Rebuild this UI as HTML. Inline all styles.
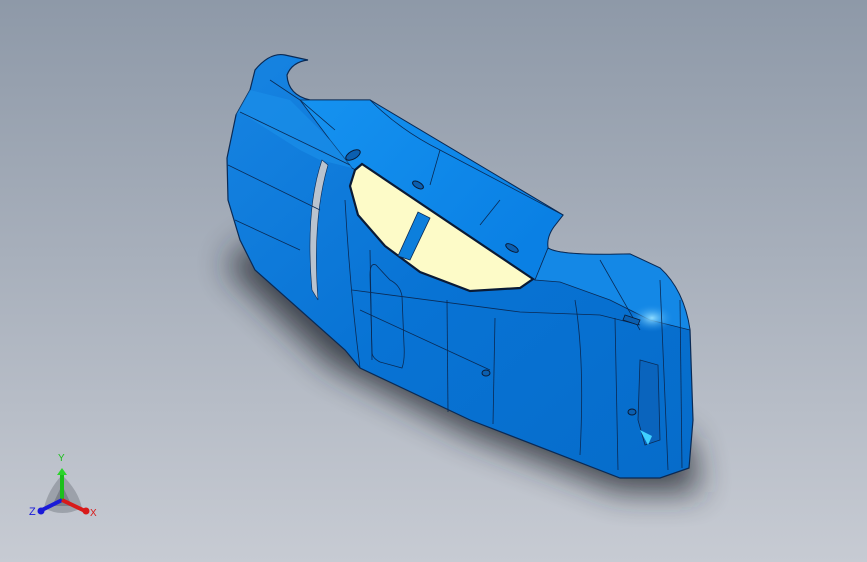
<!DOCTYPE html>
<html><head><style>
html,body{margin:0;padding:0;width:867px;height:562px;overflow:hidden}
body{background:linear-gradient(180deg,#8e99a8 0%,#a7afbb 45%,#c7cbd3 100%)}
svg{position:absolute;left:0;top:0}
</style></head><body>
<svg width="867" height="562" viewBox="0 0 867 562">
<defs>
<filter id="bl" x="-30%" y="-30%" width="160%" height="160%"><feGaussianBlur stdDeviation="16"/></filter>
<linearGradient id="body" x1="0" y1="0" x2="1" y2="1">
<stop offset="0" stop-color="#1784e2"/><stop offset="0.5" stop-color="#0873d4"/><stop offset="1" stop-color="#066cca"/>
</linearGradient>
<linearGradient id="roof" x1="0" y1="0" x2="1" y2="0.6">
<stop offset="0" stop-color="#1592f0"/><stop offset="1" stop-color="#0a80e4"/>
</linearGradient>
<radialGradient id="hl" cx="0.5" cy="0.5" r="0.5"><stop offset="0" stop-color="#8fdcff"/><stop offset="1" stop-color="#1a8ae6" stop-opacity="0"/></radialGradient>
</defs>
<path d="M225 265 L330 365 L470 435 L620 492 L700 492 L690 440 L560 390 L400 320 L255 240 Z" fill="#23272f" opacity="0.8" filter="url(#bl)"/>
<path d="M255 70 Q270 52 285 55 L308 60 Q292 62 287 75 Q288 95 310 100 L370 100 L563 215 L556 224 Q546 236 548 248 Q560 256 630 254 L660 268 Q684 290 690 330 L693 420 L689 468 L660 478 L620 478 L470 420 L360 368 L345 350 L300 310 L255 270 L240 240 L228 200 L227 158 L236 115 L250 90 Z" fill="url(#body)" stroke="#0a2a55" stroke-width="1.2"/>
<path d="M300 100 L370 100 L563 215 L556 224 Q546 236 548 248 L535 280 L352 168 L330 140 Z" fill="url(#roof)" stroke="#0a2a55" stroke-width="0.8"/>
<path d="M548 248 Q560 256 630 254 L660 268 Q684 290 690 330 L650 320 L610 300 L560 282 L535 280 Z" fill="#1488e6" stroke="#0a2a55" stroke-width="0.8"/>
<ellipse cx="652" cy="318" rx="22" ry="14" fill="url(#hl)"/>
<path d="M236 115 L250 90 L290 100 L330 140 L352 168 L320 160 L300 150 L240 112 Z" fill="#1a8ee8" opacity="0.7"/>
<path d="M322 160 Q305 210 312 290 L318 300 Q312 220 328 165 Z" fill="#b9c3cf" stroke="#0a2a55" stroke-width="0.6"/>
<path d="M355 170 L362 164 L533 279 L520 288 L470 291 L420 272 L385 246 L358 215 L350 186 Z" fill="#fdfbc8" stroke="#0a1a35" stroke-width="2.2"/>
<path d="M398 256 L418 212 L430 218 L410 260 Z" fill="#0d7fdc" stroke="#0a2a55" stroke-width="0.8"/>
<g fill="none" stroke="#0a2a55" stroke-width="0.8">
<path d="M345 200 Q350 290 360 368"/>
<path d="M370 250 L372 360"/>
<path d="M376 265 Q370 262 370 275 L372 352 Q372 358 380 362 L402 368 Q405 360 404 345 L402 296 Q400 285 390 280 Z"/>
<path d="M447 300 L448 412"/>
<path d="M495 318 L493 424"/>
<path d="M575 300 Q585 360 580 455"/>
<path d="M615 318 L618 470"/>
<path d="M360 310 L490 370"/>
<path d="M352 290 L520 312 L600 315 L640 325"/>
<path d="M240 112 L350 165"/>
<path d="M228 165 L320 210"/>
<path d="M235 220 L300 250"/>
<path d="M660 280 L668 470"/>
<path d="M680 300 L682 468"/>
<path d="M370 100 Q400 130 440 150 L563 215"/>
<path d="M440 150 L430 185"/>
<path d="M500 200 L480 225"/>
<path d="M600 260 L640 330"/>
<path d="M270 80 L300 100 L335 130"/>
</g>
<path d="M640 360 L658 365 L660 440 L645 445 L638 420 Z" fill="#0a64bd" stroke="#0a2a55" stroke-width="0.8"/>
<path d="M640 430 L652 436 L648 445 Z" fill="#3fd0ff"/>
<ellipse cx="353" cy="155" rx="8" ry="4" fill="#0b5fb0" stroke="#0a1a35" transform="rotate(-30 353 155)"/>
<ellipse cx="418" cy="185" rx="6" ry="3" fill="#0b5fb0" stroke="#0a1a35" transform="rotate(30 418 185)"/>
<ellipse cx="512" cy="248" rx="7" ry="3" fill="#0b5fb0" stroke="#0a1a35" transform="rotate(30 512 248)"/>
<ellipse cx="486" cy="373" rx="4" ry="3" fill="#0b5fb0" stroke="#0a1a35"/>
<ellipse cx="632" cy="412" rx="4" ry="3" fill="#0b5fb0" stroke="#0a1a35"/>
<path d="M625 315 L640 320 L638 325 L623 320 Z" fill="#0b5fb0" stroke="#0a1a35" stroke-width="0.8"/>
<path d="M62 475 Q48 490 44 508 Q62 518 82 508 Q78 490 62 475 Z" fill="#7d838c" opacity="0.55"/>
<path d="M62 485 L52 506 L72 506 Z" fill="#5c626b" opacity="0.5"/>
<line x1="62" y1="500" x2="62" y2="474" stroke="#1bbf1b" stroke-width="4"/>
<path d="M57 475 L62 468 L67 475 Z" fill="#2ad42a"/>
<line x1="62" y1="500" x2="42" y2="510" stroke="#1a1ad8" stroke-width="4"/>
<circle cx="41" cy="511" r="3.5" fill="#1a1ad8"/>
<line x1="62" y1="500" x2="85" y2="511" stroke="#d81a1a" stroke-width="4"/>
<circle cx="86" cy="511" r="3.5" fill="#d81a1a"/>
<text x="58" y="461" font-family="Liberation Sans, sans-serif" font-size="10" fill="#1bbf1b">Y</text>
<text x="29" y="515" font-family="Liberation Sans, sans-serif" font-size="11" fill="#1a1ad8">Z</text>
<text x="90" y="516" font-family="Liberation Sans, sans-serif" font-size="10" fill="#d81a1a">X</text>
</svg>
</body></html>
